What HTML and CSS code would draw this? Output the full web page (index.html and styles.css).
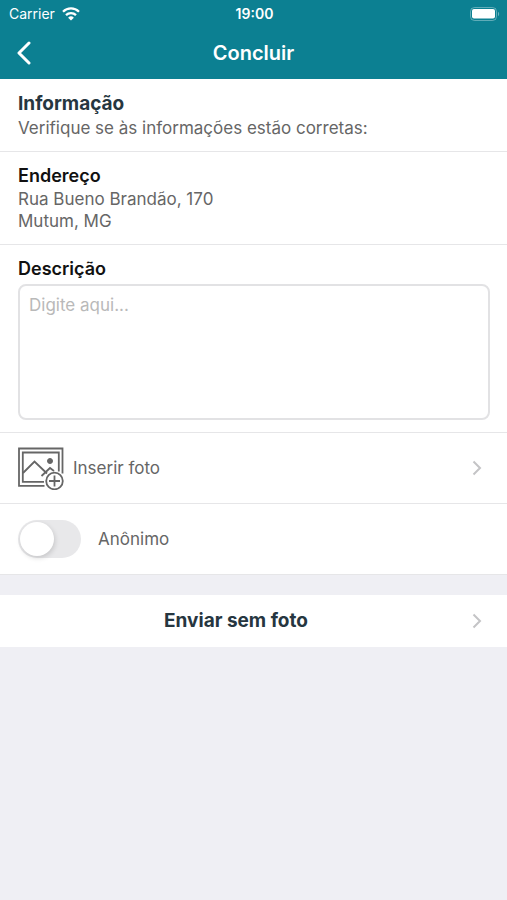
FILE: index.html
```html
<!DOCTYPE html>
<html lang="pt-BR">
<head>
  <meta charset="UTF-8">
  <meta name="viewport" content="width=device-width, initial-scale=1">
  <title>Concluir</title>
  <link rel="stylesheet" href="styles.css">
</head>
<body>
  <header class="header">
    <div class="status-bar">
      <div class="carrier">
        <span>Carrier</span>
        <svg class="wifi" width="18" height="14" viewBox="0 0 18 14" fill="none" stroke="#fff" stroke-width="2.3">
          <path d="M1 4.7a11.4 11.4 0 0 1 16 0"/>
          <path d="M4 8.1a7.1 7.1 0 0 1 10 0"/>
          <path d="M9 13.6L6.1 10.7a4.1 4.1 0 0 1 5.8 0z" fill="#fff" stroke="none"/>
        </svg>
      </div>
      <div class="clock">19:00</div>
      <svg class="battery" width="30" height="14" viewBox="0 0 30 14">
        <rect x="0.5" y="0.5" width="26" height="13" rx="4" fill="none" stroke="#fff" stroke-opacity="0.35"/>
        <rect x="2" y="2" width="23" height="9.500" rx="2" fill="#fff"/>
        <path d="M28 4.8a2.6 2.6 0 0 1 0 4.4z" fill="#fff" fill-opacity="0.4"/>
      </svg>
    </div>
    <nav class="nav-bar">
      <button class="back" aria-label="Voltar">
        <svg width="16" height="24" viewBox="0 0 16 24" fill="none" stroke="#fff" stroke-width="3" stroke-linecap="round" stroke-linejoin="round">
          <path d="M13 2L3 12l10 10"/>
        </svg>
      </button>
      <h1 class="nav-title">Concluir</h1>
    </nav>
  </header>

  <main>
    <section class="section">
      <h2 class="title">Informação</h2>
      <p class="text">Verifique se às informações estão corretas:</p>
    </section>

    <section class="section">
      <h3 class="subtitle">Endereço</h3>
      <p class="text">Rua Bueno Brandão, 170<br>Mutum, MG</p>
    </section>

    <section class="section">
      <label class="subtitle" for="descricao">Descrição</label>
      <textarea id="descricao" class="description" placeholder="Digite aqui..."></textarea>
    </section>

    <button class="row photo">
      <svg width="46" height="44" viewBox="0 0 46 44" fill="none" stroke="#666" stroke-width="1.8">
        <path d="M26.500 39.800H1V2.500h43.500v25"/>
        <path d="M26 35.800H4.800V6.500h36v19"/>
        <path d="M5 27l11.500-11.500 12.500 12"/>
        <path d="M23.500 30l8.500-8 4 3"/>
        <circle cx="32" cy="15" r="2.500" fill="#666" stroke-width="1"/>
        <circle cx="36.500" cy="35" r="8.300"/>
        <path d="M31 35h11M36.500 29.500v11"/>
      </svg>
      <span class="row-text">Inserir foto</span>
      <svg class="arrow" width="10" height="16" viewBox="0 0 10 16"><path d="M1.500 1.500L8 8l-6.500 6.500"/></svg>
    </button>

    <label class="row anonymous">
      <input type="checkbox" role="switch" class="switch">
      <span class="row-text">Anônimo</span>
    </label>

    <button class="row send">
      <span class="send-text">Enviar sem foto</span>
      <svg class="arrow" width="10" height="16" viewBox="0 0 10 16"><path d="M1.500 1.500L8 8l-6.500 6.500"/></svg>
    </button>
  </main>
</body>
</html>
```

FILE: styles.css
```css
* {
  box-sizing: border-box;
}

body {
  margin: 0;
  min-height: 100vh;
  background: #efeff4;
  color: #666;
  font-family: Inter, "Liberation Sans", sans-serif;
  font-size: 17px;
  line-height: 22px;
}

h1, h2, h3, p {
  margin: 0;
}

button, textarea {
  font: inherit;
  color: inherit;
}

svg {
  display: block;
  flex: none;
}

.header {
  background: #0c8092;
  color: #fff;
}

.status-bar {
  display: grid;
  grid-template-columns: 1fr auto 1fr;
  align-items: center;
  height: 27px;
  padding: 0 7px 0 9px;
  font-size: 14px;
}

.carrier {
  display: flex;
  align-items: center;
  gap: 7px;
}

.clock {
  font-weight: 600;
}

.battery {
  justify-self: end;
}

.nav-bar {
  display: grid;
  grid-template-columns: 1fr auto 1fr;
  align-items: center;
  height: 52px;
  padding: 0 16px;
}

.back {
  justify-self: start;
  padding: 0;
  border: none;
  background: none;
  cursor: pointer;
}

.nav-title {
  font-size: 20px;
  font-weight: 600;
}

.section {
  padding: 13px 17px 12px 18px;
  background: #fff;
  border-bottom: 1px solid #e6e6e8;
}

.title {
  color: #263640;
  font-size: 19px;
  font-weight: 700;
  line-height: 24px;
}

.subtitle {
  display: block;
  color: #111;
  font-size: 18px;
  font-weight: 600;
  line-height: 22px;
}

.text {
  margin-top: 1px;
}

.description {
  display: block;
  width: 100%;
  height: 136px;
  margin-top: 4px;
  padding: 8px 9px;
  border: 2px solid #e2e2e4;
  border-radius: 8px;
  background: #fff;
  resize: none;
}

.description::placeholder {
  color: #b9b9b9;
}

.row {
  display: flex;
  align-items: center;
  width: 100%;
  height: 71px;
  padding: 0 25px 0 18px;
  border: none;
  border-bottom: 1px solid #e6e6e8;
  background: #fff;
  text-align: left;
}

.photo {
  gap: 9px;
  cursor: pointer;
}

.anonymous {
  gap: 17px;
}

.row-text {
  flex: 1;
}

.arrow {
  fill: none;
  stroke: #c4c4c6;
  stroke-width: 2;
}

.switch {
  appearance: none;
  display: flex;
  width: 63px;
  height: 38px;
  margin: 0;
  padding: 2px;
  border-radius: 19px;
  background: #e8e8ea;
}

.switch::before {
  content: "";
  width: 34px;
  height: 34px;
  border-radius: 50%;
  background: #fff;
  box-shadow: 1px 2px 5px rgba(0, 0, 0, 0.15);
}

.switch:checked {
  background: #0c8092;
}

.switch:checked::before {
  margin-left: auto;
}

.send {
  height: 52px;
  margin-top: 20px;
  padding-left: 0;
  border-bottom: none;
  cursor: pointer;
}

.send-text {
  flex: 1;
  color: #263640;
  font-size: 19px;
  font-weight: 700;
  text-align: center;
}
```
